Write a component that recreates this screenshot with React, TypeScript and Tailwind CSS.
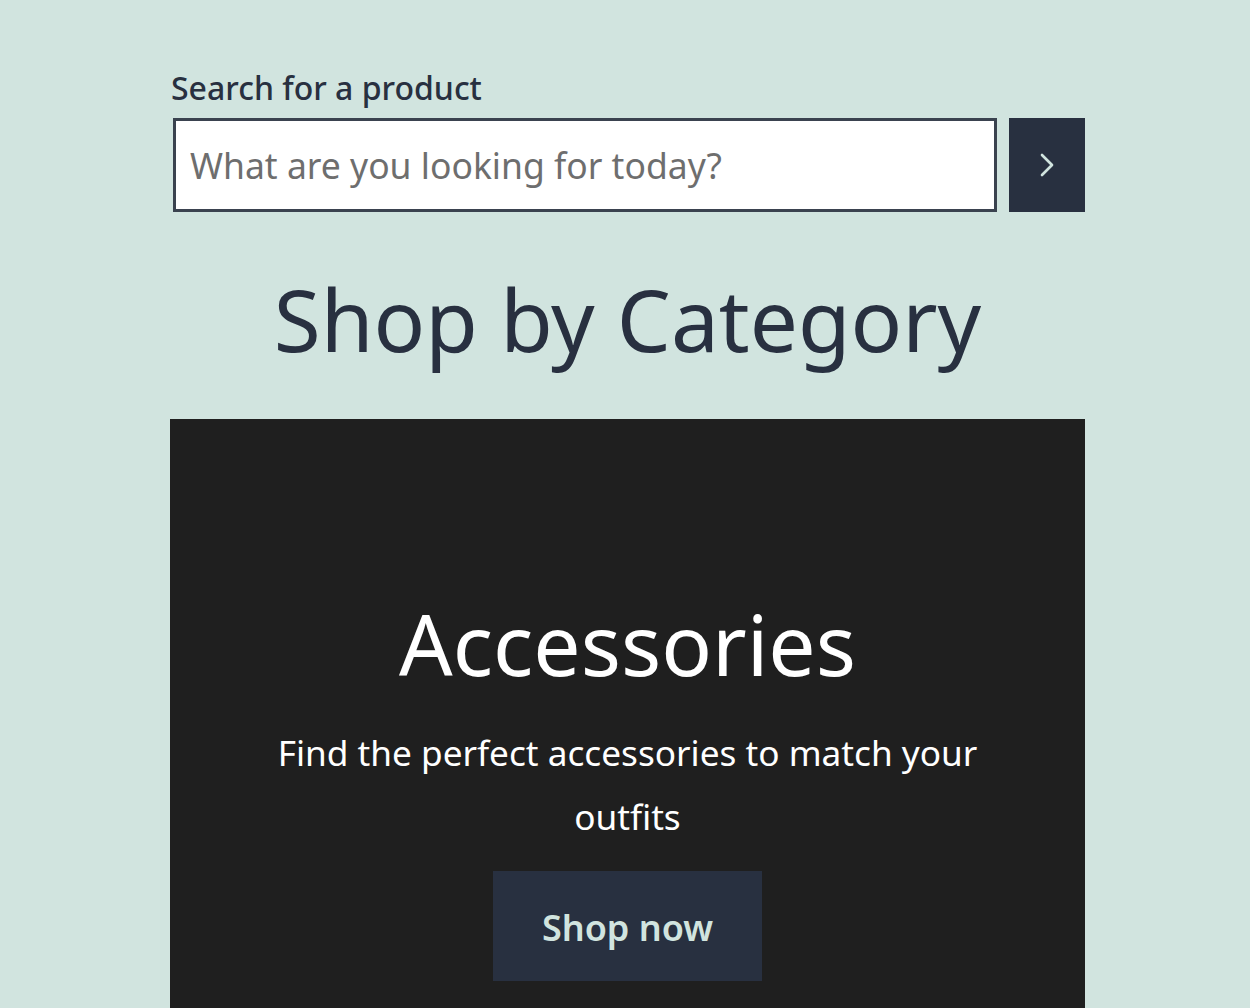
import { ChevronRight } from 'lucide-react';

export default function App() {
  return (
    <div className="min-h-screen bg-[#d1e4df] text-[#283040]" style={{ fontFamily: '"Noto Sans", "Open Sans", sans-serif' }}>
      <div className="ml-[170px] w-[915px] pt-[64px]">
        <label htmlFor="search" className="block text-[32px] font-medium leading-[48px] pl-[1px]">
          Search for a product
        </label>
        <form className="mt-[6px] flex gap-3" onSubmit={e => e.preventDefault()}>
          <input
            id="search"
            placeholder="What are you looking for today?"
            className="h-[94px] flex-1 ml-[3px] border-[3px] border-[#3a424f] bg-white pl-[14px] text-[35.5px] text-[#283040] placeholder-[#6e6e6e] outline-none"
          />
          <button type="submit" className="flex h-[94px] w-[76px] items-center justify-center bg-[#283040] text-[#d1e4df]">
            <ChevronRight size={40} strokeWidth={1.6} />
          </button>
        </form>

        <h2 className="mt-[47px] text-center text-[85.5px] font-normal leading-[120px]">Shop by Category</h2>

        <div className="mt-[40px] bg-[#1f1f1f] pt-[165px] pb-[40px] text-center text-white">
          <h3 className="text-[84px] leading-[120px]">Accessories</h3>
          <p className="mx-auto mt-[16px] w-[740px] text-[35.2px] leading-[64px]">
            Find the perfect accessories to match your outfits
          </p>
          <a href="#" className="mt-[23px] inline-flex h-[110px] w-[269px] items-center justify-center bg-[#283040] pt-[3px] text-[36px] font-semibold text-[#d1e4df]">
            Shop now
          </a>
        </div>
      </div>
    </div>
  );
}
